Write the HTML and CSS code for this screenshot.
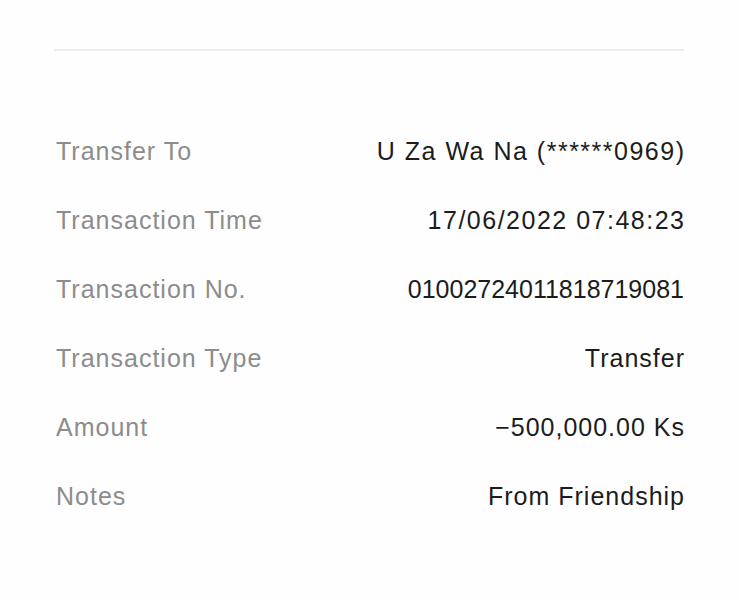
FILE: index.html
```html
<!DOCTYPE html>
<html lang="en">
<head>
    <meta charset="UTF-8">
    <meta name="viewport" content="width=device-width, initial-scale=1.0">
    <title>Transaction Details</title>
    <link rel="stylesheet" href="styles.css">
</head>
<body>
    <div class="receipt">
        <div class="divider"></div>
        <div class="details">
            <div class="row"><span class="label">Transfer To</span><span class="value wide">U Za Wa Na (******0969)</span></div>
            <div class="row"><span class="label">Transaction Time</span><span class="value wide">17/06/2022 07:48:23</span></div>
            <div class="row"><span class="label">Transaction No.</span><span class="value digits">01002724011818719081</span></div>
            <div class="row"><span class="label">Transaction Type</span><span class="value">Transfer</span></div>
            <div class="row"><span class="label">Amount</span><span class="value">&minus;500,000.00 Ks</span></div>
            <div class="row"><span class="label">Notes</span><span class="value">From Friendship</span></div>
        </div>
    </div>
</body>
</html>
```

FILE: styles.css
```css
* {
    margin: 0;
    padding: 0;
    box-sizing: border-box;
}

body {
    font-family: 'Liberation Sans', Arial, sans-serif;
    background: #fefefe;
    width: 739px;
    height: 600px;
    overflow: hidden;
}

.receipt {
    padding: 49px 55px 0 54px;
}

.divider {
    height: 2px;
    background: #ececec;
}

.details {
    margin-top: 66px;
    display: flex;
    flex-direction: column;
}

.row {
    display: flex;
    justify-content: space-between;
    align-items: center;
    height: 69px;
    font-size: 25px;
    letter-spacing: 1px;
    padding-left: 2px;
}

.label {
    color: #8c8c8c;
}

.value {
    color: #1c1c1c;
    margin-right: -1px;
}

.value.wide {
    letter-spacing: 1.5px;
    margin-right: -1.5px;
}

.value.digits {
    letter-spacing: 0;
    margin-right: 0;
}
```
